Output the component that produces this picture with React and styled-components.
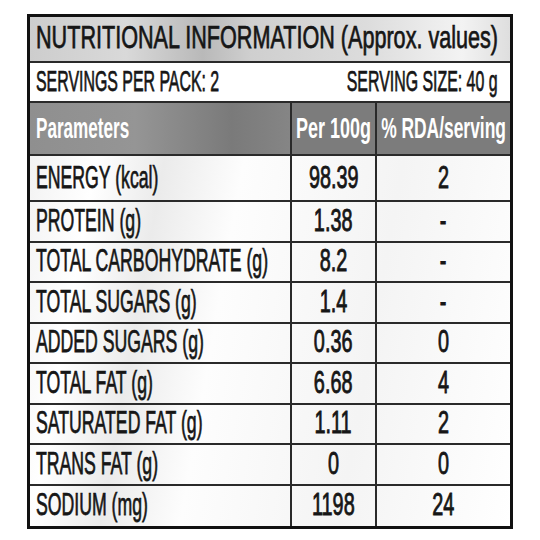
import React from "react";
import styled, { createGlobalStyle } from "styled-components";

const GlobalStyle = createGlobalStyle`
  html, body {
    margin: 0;
    padding: 0;
    background: #ffffff;
  }
  body {
    font-family: "Liberation Sans", Arial, sans-serif;
    color: #161616;
  }
`;

const Page = styled.div`
  width: 540px;
  height: 540px;
  padding: 14px 27px;
  box-sizing: border-box;
  overflow: hidden;
`;

const Label = styled.div`
  width: 486px;
  box-sizing: border-box;
  border: 3px solid #111;
  background: linear-gradient(100deg, #eeeeee 0%, #ffffff 16%, #ebebeb 28%, #fdfdfd 42%, #f4f4f4 70%, #ffffff 100%);
`;

const TitleBar = styled.div`
  height: 46px;
  box-sizing: border-box;
  border-bottom: 2px solid #2a2a2a;
  padding: 0 6px 5px;
  display: flex;
  align-items: center;
  background: linear-gradient(90deg, #cdcdcd 0%, #d9d9d9 20%, #b9b9b9 36%, #cfcfcf 46%, #dcdcdc 70%, #f3f3f3 90%, #dedede 100%);
`;

const ServingsBar = styled.div`
  height: 40px;
  box-sizing: border-box;
  border-bottom: 2px solid #2a2a2a;
  padding: 0 12px 2px 6px;
  display: grid;
  grid-template-columns: 1fr 1fr;
  background: #ffffff;
`;

const Side = styled.div`
  display: flex;
  align-items: center;
  justify-content: ${({ $end }) => ($end ? "flex-end" : "flex-start")};
  min-width: 0;
  white-space: nowrap;
`;

const Grid = styled.div`
  display: grid;
  grid-template-columns: 262px 85px 133px;
  height: ${({ $h }) => $h}px;
  box-sizing: border-box;
  border-bottom: ${({ $last }) => ($last ? "none" : "2px solid #2a2a2a")};
  background: ${({ $head }) =>
    $head
      ? "linear-gradient(90deg, #8f8f8f 0%, #959595 22%, #7a7a7a 42%, #858585 54%)"
      : "transparent"};
`;

const Cell = styled.div`
  display: flex;
  align-items: center;
  justify-content: ${({ $align }) => $align || "center"};
  padding: ${({ $align }) => ($align === "flex-start" ? "0 0 2px 6px" : "0 0 2px")};
  box-sizing: border-box;
  border-right: ${({ $edge }) => ($edge ? "none" : "2px solid #2a2a2a")};
  background: ${({ $head }) => ($head ? "#7c7c7c" : "transparent")};
  min-width: 0;
  white-space: nowrap;
`;

const Squeeze = styled.span`
  display: inline-block;
  flex-shrink: 0;
  white-space: nowrap;
  line-height: 1;
  font-size: ${({ $size }) => $size}px;
  font-weight: ${({ $bold }) => ($bold ? 700 : 400)};
  color: ${({ $light }) => ($light ? "#ffffff" : "#161616")};
  transform: scaleX(${({ $sx }) => $sx});
  transform-origin: ${({ $origin }) => $origin || "center"} center;
  -webkit-text-stroke: ${({ $bold, $heavy }) => ($bold ? "0" : $heavy ? "0.9px" : "0.75px")} currentColor;
`;

const rows = [
  ["ENERGY (kcal)", "98.39", "2"],
  ["PROTEIN (g)", "1.38", "-"],
  ["TOTAL CARBOHYDRATE (g)", "8.2", "-"],
  ["TOTAL SUGARS (g)", "1.4", "-"],
  ["ADDED SUGARS (g)", "0.36", "0"],
  ["TOTAL FAT (g)", "6.68", "4"],
  ["SATURATED FAT (g)", "1.11", "2"],
  ["TRANS FAT (g)", "0", "0"],
  ["SODIUM (mg)", "1198", "24"],
];

export default function App() {
  return (
    <Page>
      <GlobalStyle />
      <Label>
        <TitleBar>
          <Squeeze $size={32} $sx={0.675} $origin="left">
            NUTRITIONAL INFORMATION (Approx. values)
          </Squeeze>
        </TitleBar>
        <ServingsBar>
          <Side>
            <Squeeze $size={30} $sx={0.53} $origin="left">
              SERVINGS PER PACK: 2
            </Squeeze>
          </Side>
          <Side $end>
            <Squeeze $size={30} $sx={0.53} $origin="right">
              SERVING SIZE: 40 g
            </Squeeze>
          </Side>
        </ServingsBar>
        <Grid $h={53} $head>
          <Cell $align="flex-start">
            <Squeeze $size={30} $sx={0.57} $bold $light $origin="left">
              Parameters
            </Squeeze>
          </Cell>
          <Cell $head>
            <Squeeze $size={30} $sx={0.6} $bold $light>
              Per 100g
            </Squeeze>
          </Cell>
          <Cell $head $edge>
            <Squeeze $size={30} $sx={0.58} $bold $light>
              % RDA/serving
            </Squeeze>
          </Cell>
        </Grid>
        {rows.map(([name, per, rda], i) => (
          <Grid key={name} $h={i === 0 ? 46 : 40.5} $last={i === rows.length - 1}>
            <Cell $align="flex-start">
              <Squeeze $size={31} $sx={0.57} $origin="left">
                {name}
              </Squeeze>
            </Cell>
            <Cell>
              <Squeeze $size={31} $sx={0.64} $heavy>
                {per}
              </Squeeze>
            </Cell>
            <Cell $edge>
              <Squeeze $size={31} $sx={0.64} $heavy>
                {rda}
              </Squeeze>
            </Cell>
          </Grid>
        ))}
      </Label>
    </Page>
  );
}
